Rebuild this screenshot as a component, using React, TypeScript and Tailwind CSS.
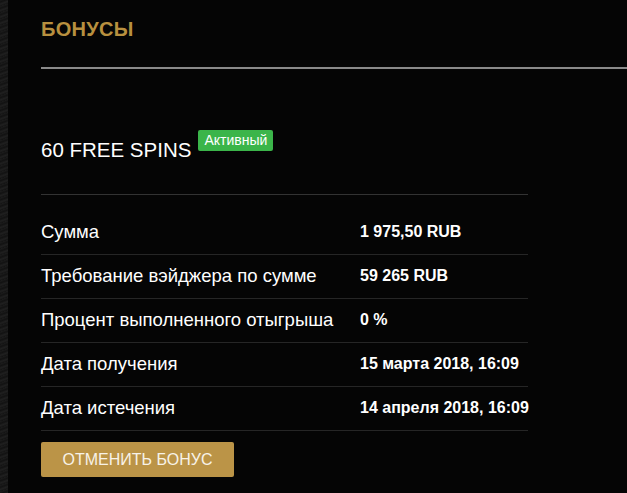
import React from 'react';

const ROWS = [
  { label: 'Сумма', value: '1 975,50 RUB' },
  { label: 'Требование вэйджера по сумме', value: '59 265 RUB' },
  { label: 'Процент выполненного отыгрыша', value: '0 %' },
  { label: 'Дата получения', value: '15 марта 2018, 16:09' },
  { label: 'Дата истечения', value: '14 апреля 2018, 16:09' },
];

export default function App() {
  return (
    <div className="flex h-[493px] w-full overflow-hidden bg-[#050505] font-['Liberation_Sans',Arial,sans-serif]">
      <div className="w-2 shrink-0 bg-[repeating-linear-gradient(160deg,#1c1c1c_0px,#121212_2px,#202020_4px,#141414_6px)]" />
      <div className="flex-1 pl-[33px]">
        <h2 className="pt-[17px] pb-[26px] text-[20px] leading-6 font-bold tracking-[0.3px] text-[#b8903f] border-b-2 border-[#8a8a8a]">
          БОНУСЫ
        </h2>

        <div className="w-[487px]">
          <div className="mt-[67px] flex items-start">
            <span className="text-[20.5px] leading-7 text-white">60 FREE SPINS</span>
            <span className="ml-[7px] -mt-[6px] rounded-[2px] bg-[#3bb54a] px-[6px] text-[14px] leading-[21px] text-white">
              Активный
            </span>
          </div>

          <div className="mt-[30px] mb-[16px] border-b border-[#333]" />

          {ROWS.map((row) => (
            <div
              key={row.label}
              className="flex h-[44px] items-center border-b border-[#262626] pb-[1px]"
            >
              <div className="w-[319px] shrink-0 whitespace-nowrap text-[18.5px] text-white">{row.label}</div>
              <div className="whitespace-nowrap text-[16px] font-bold text-white">{row.value}</div>
            </div>
          ))}

          <button className="mt-[11px] h-[35px] w-[193px] rounded-[2px] bg-[#bb9447] text-[16px] text-[#f7f2e8]">
            ОТМЕНИТЬ БОНУС
          </button>
        </div>
      </div>
    </div>
  );
}
